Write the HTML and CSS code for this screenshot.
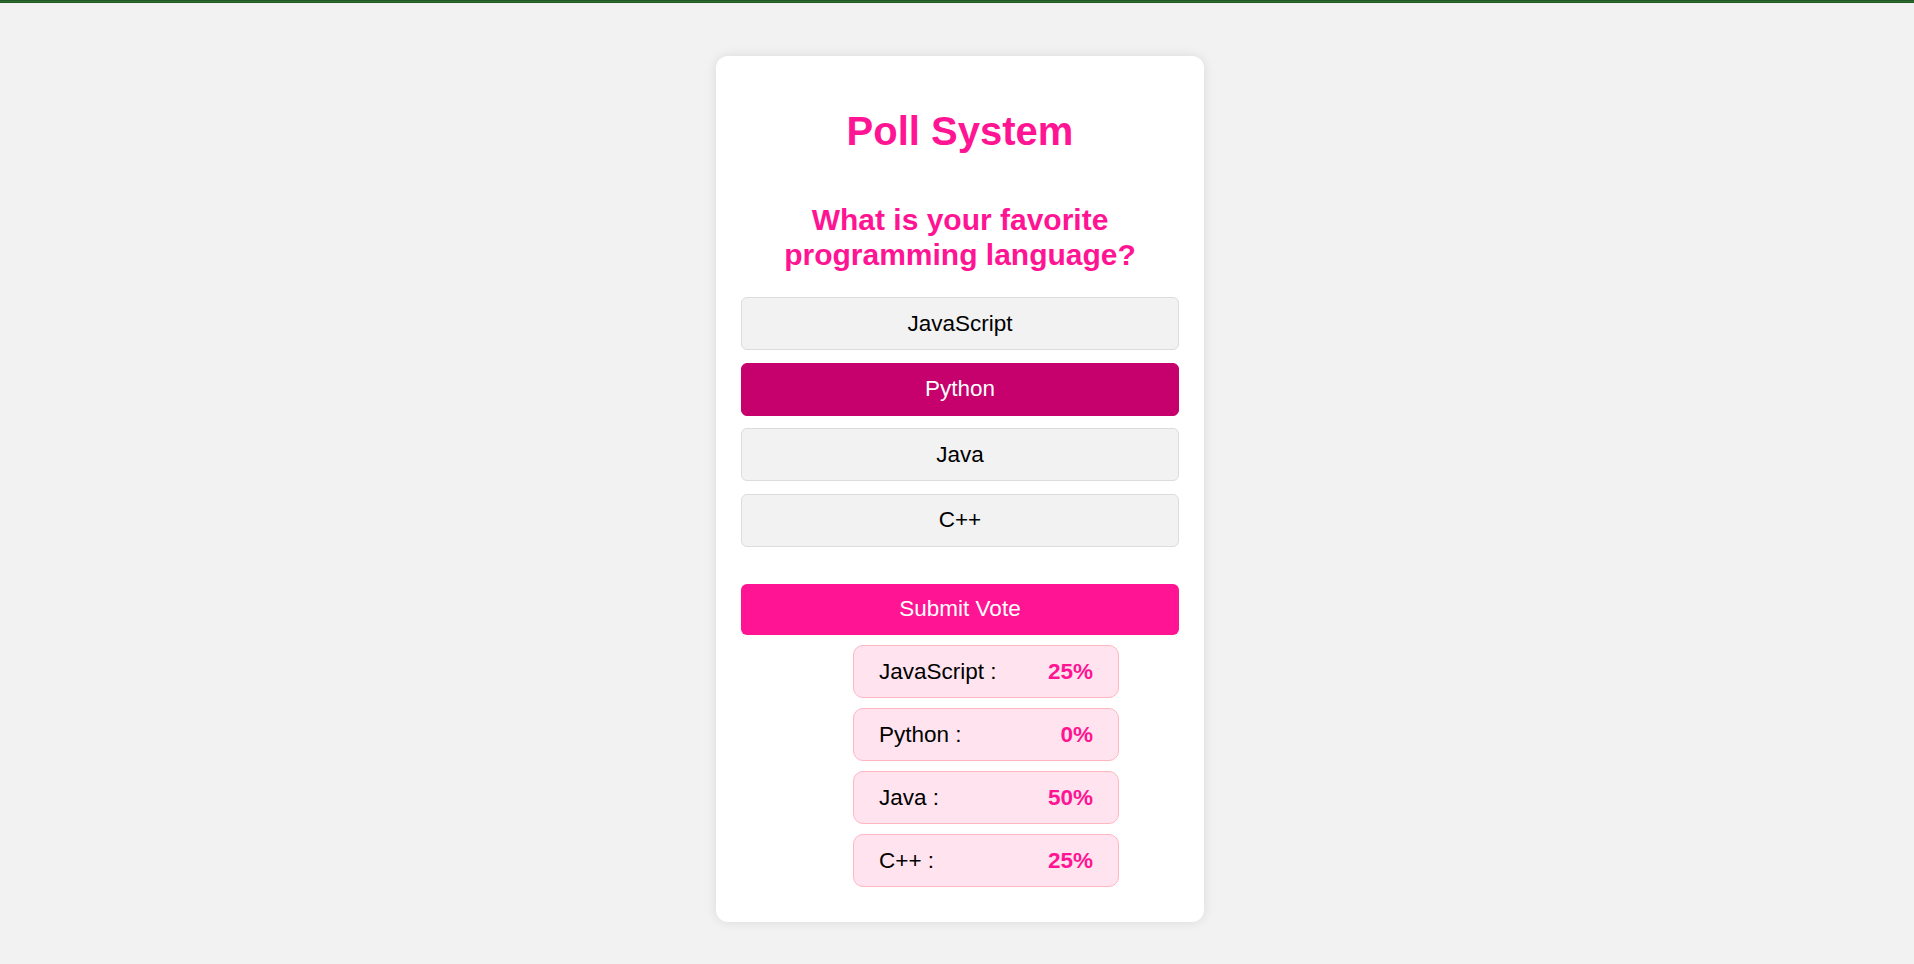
FILE: index.html
```html
<!DOCTYPE html>
<html lang="en">
<head>
<meta charset="utf-8">
<title>Poll System</title>
<link rel="stylesheet" href="styles.css">
</head>
<body>
<div class="topbar"></div>
<main class="page">
  <div class="card">
    <h1 class="title">Poll System</h1>
    <h2 class="question">What is your favorite programming language?</h2>
    <div class="options">
      <button class="option">JavaScript</button>
      <button class="option selected">Python</button>
      <button class="option">Java</button>
      <button class="option">C++</button>
    </div>
    <button class="submit">Submit Vote</button>
    <ul class="results">
      <li class="result"><span class="lang">JavaScript :</span><span class="pct">25%</span></li>
      <li class="result"><span class="lang">Python :</span><span class="pct">0%</span></li>
      <li class="result"><span class="lang">Java :</span><span class="pct">50%</span></li>
      <li class="result"><span class="lang">C++ :</span><span class="pct">25%</span></li>
    </ul>
  </div>
</main>
</body>
</html>
```
FILE: styles.css
```css
html, body {
  margin: 0;
  padding: 0;
}
body {
  background: #f2f2f2;
  font-family: "Liberation Sans", Arial, sans-serif;
  min-height: 964px;
}
.topbar {
  height: 3px;
  background: linear-gradient(#1b4d1d, #2e6e2f 50%, #1b4d1d);
}
.page {
  display: flex;
  justify-content: center;
  padding-left: 6px;
  padding-top: 53px;
}
.card {
  width: 438px;
  padding: 25px;
  background: #ffffff;
  border-radius: 12px;
  box-shadow: 0 0 12px rgba(0, 0, 0, 0.1);
}
.title {
  margin: 27px 0 0;
  font-size: 40px;
  line-height: 46px;
  font-weight: bold;
  color: #ff1493;
  text-align: center;
}
.question {
  margin: 49px 0 25px;
  font-size: 30px;
  line-height: 34.5px;
  font-weight: bold;
  color: #ff1493;
  text-align: center;
}
.options {
  display: flex;
  flex-direction: column;
  gap: 12.7px;
}
.option {
  display: block;
  width: 100%;
  padding: 12.5px;
  font-family: "Liberation Sans", Arial, sans-serif;
  font-size: 22.5px;
  line-height: 25.9px;
  color: #000;
  background: #f2f2f2;
  border: 1px solid #dcdcdc;
  border-radius: 6px;
  text-align: center;
}
.option.selected {
  background: #c6006c;
  border-color: #c6006c;
  color: #ffffff;
}
.submit {
  display: block;
  width: 100%;
  margin-top: 37px;
  padding: 12.5px;
  font-family: "Liberation Sans", Arial, sans-serif;
  font-size: 22.5px;
  line-height: 25.9px;
  color: #ffffff;
  background: #ff1493;
  border: none;
  border-radius: 6px;
  text-align: center;
}
.results {
  list-style: none;
  margin: 10.5px 0 0;
  padding: 0 0 0 52px;
  display: flex;
  flex-direction: column;
  align-items: center;
  gap: 10.1px;
}
.result {
  box-sizing: border-box;
  width: 266px;
  display: flex;
  justify-content: space-between;
  align-items: center;
  padding: 12.5px 25px;
  font-size: 22.5px;
  line-height: 25.9px;
  background: #ffe4ef;
  border: 1px solid #ffb6c1;
  border-radius: 10px;
}
.result:last-child {
  margin-bottom: 10px;
}
.lang {
  color: #000;
}
.pct {
  color: #ff1493;
  font-weight: bold;
}
```
